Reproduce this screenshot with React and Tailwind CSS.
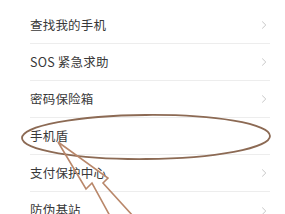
import React from 'react'

const items = ['查找我的手机', 'SOS 紧急求助', '密码保险箱', '手机盾', '支付保护中心', '防伪基站']

function Chevron() {
  return (
    <svg width="6" height="10" viewBox="0 0 6 10" className="shrink-0">
      <path d="M1.2 1.5 L4.8 5 L1.2 8.5" fill="none" stroke="#c8c8c8" strokeWidth="1" />
    </svg>
  )
}

export default function App() {
  return (
    <div
      className="relative w-[285px] h-[214px] overflow-hidden bg-white"
      style={{ fontFamily: '"Noto Sans CJK SC", "Noto Sans", sans-serif' }}
    >
      <div className="pt-[7px]">
        {items.map((label, i) => (
          <div key={label} className="pl-[30px] pr-[15px]">
            <div
              className={
                'h-[37px] flex items-center justify-between ' +
                (i < items.length - 1 ? 'border-b border-[#ededed]' : '')
              }
            >
              <span className="text-[12.5px] text-[#383838] tracking-[0.2px]">{label}</span>
              {i !== 3 && (
                <span className="pr-[3px] flex items-center">
                  <Chevron />
                </span>
              )}
            </div>
          </div>
        ))}
      </div>

      {/* hand-drawn annotation */}
      <svg className="absolute inset-0 pointer-events-none" width="285" height="214" viewBox="0 0 285 214">
        <ellipse
          cx="146"
          cy="137"
          rx="124"
          ry="22"
          fill="none"
          stroke="#8c6a54"
          strokeWidth="1.8"
          transform="rotate(-0.5 146 137)"
        />
        <polyline
          points="110,216 92,183 86,189 58,142 108,178 103,183 133,216"
          fill="none"
          stroke="#b9876a"
          strokeWidth="1.6"
          strokeLinejoin="miter"
        />
      </svg>
    </div>
  )
}
